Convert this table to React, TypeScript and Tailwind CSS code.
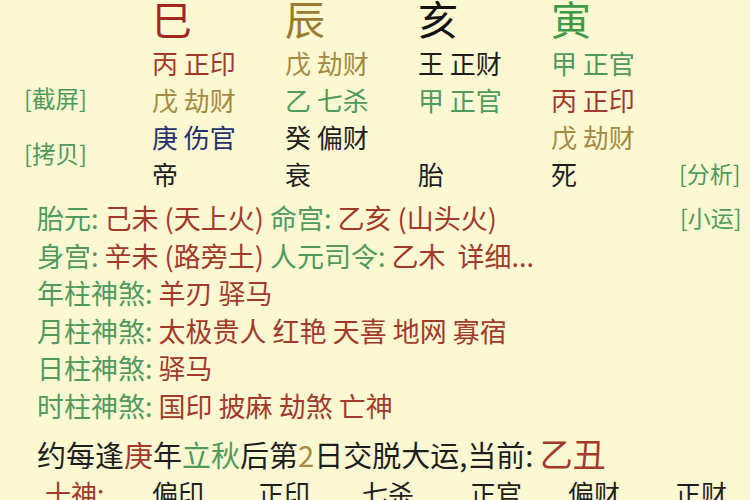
const font = "font-['Noto_Sans_CJK_SC','Noto_Sans',sans-serif]";

const GREEN = "text-[#4f9a5c]";
const RED = "text-[#a23a2b]";
const OLIVE = "text-[#a48a42]";
const NAVY = "text-[#25306e]";
const BLACK = "text-[#1e1e1e]";

type Cell = { text: string; color: string } | null;

const rows: Cell[][] = [
  [
    { text: "丙 正印", color: RED },
    { text: "戊 劫财", color: OLIVE },
    { text: "王 正财", color: BLACK },
    { text: "甲 正官", color: GREEN },
  ],
  [
    { text: "戊 劫财", color: OLIVE },
    { text: "乙 七杀", color: GREEN },
    { text: "甲 正官", color: GREEN },
    { text: "丙 正印", color: RED },
  ],
  [
    { text: "庚 伤官", color: NAVY },
    { text: "癸 偏财", color: BLACK },
    null,
    { text: "戊 劫财", color: OLIVE },
  ],
  [
    { text: "帝", color: BLACK },
    { text: "衰", color: BLACK },
    { text: "胎", color: BLACK },
    { text: "死", color: BLACK },
  ],
];

const shensha = [
  { label: "年柱神煞: ", value: "羊刃 驿马" },
  { label: "月柱神煞: ", value: "太极贵人 红艳 天喜 地网 寡宿" },
  { label: "日柱神煞: ", value: "驿马" },
  { label: "时柱神煞: ", value: "国印 披麻 劫煞 亡神" },
];

const shishen = [
  { text: "偏印", w: "w-[106px]" },
  { text: "正印", w: "w-[104px]" },
  { text: "七杀", w: "w-[108px]" },
  { text: "正官", w: "w-[98px]" },
  { text: "偏财", w: "w-[107px]" },
  { text: "正财", w: "w-[75px]" },
];

export default function App() {
  return (
    <div className={`${font} w-[750px] h-[500px] overflow-hidden bg-[#fcf8d2]`}>
      <div className="flex">
        <div className={`w-[152px] pl-[24px] pt-[83px] flex flex-col gap-[25px] text-[23.5px] leading-[30px] ${GREEN}`}>
          <div>[截屏]</div>
          <div>[拷贝]</div>
        </div>
        <div className="grid grid-cols-[133px_133px_133px_128px_1fr] text-[26px] leading-[37px]">
          <div className="h-[35px] text-[40px] leading-[36px] text-[#a3261f]">巳</div>
          <div className="h-[35px] text-[40px] leading-[36px] text-[#9b7b33]">辰</div>
          <div className="h-[35px] text-[40px] leading-[36px] text-[#111]">亥</div>
          <div className="h-[35px] text-[40px] leading-[36px] text-[#3c9a48]">寅</div>
          <div />
          <div className="col-span-5 h-[9px]" />
          {rows.map((r, i) => (
            <div key={i} className="contents">
              {r.map((c, j) => (
                <div key={j} className={`whitespace-pre ${c ? c.color : ""}`}>
                  {c ? c.text : ""}
                </div>
              ))}
              <div className={`text-[23px] ${GREEN}`}>{i === 3 ? "[分析]" : ""}</div>
            </div>
          ))}
        </div>
      </div>

      <div className="pl-[37px] pt-[7px] text-[27px] leading-[37.6px] whitespace-pre">
        <div className="flex">
          <div className="w-[643px]">
            <span className={GREEN}>胎元: </span>
            <span className={RED}>己未 (天上火)</span>
            <span className={GREEN}> 命宫: </span>
            <span className={RED}>乙亥 (山头火)</span>
          </div>
          <div className={`text-[23px] ${GREEN}`}>[小运]</div>
        </div>
        <div>
          <span className={GREEN}>身宫: </span>
          <span className={RED}>辛未 (路旁土)</span>
          <span className={GREEN}> 人元司令: </span>
          <span className={RED}>乙木  详细...</span>
        </div>
        {shensha.map((s) => (
          <div key={s.label}>
            <span className={GREEN}>{s.label}</span>
            <span className={RED}>{s.value}</span>
          </div>
        ))}
      </div>

      <div className={`pl-[37px] pt-[8px] text-[29px] leading-[40px] whitespace-pre ${BLACK}`}>
        约每逢<span className={RED}>庚</span>年<span className={GREEN}>立秋</span>后第
        <span className={OLIVE}>2</span>日交脱大运,当前: <span className={`text-[33px] ${RED}`}>乙丑</span>
      </div>

      <div className="flex pl-[45px] text-[26px] leading-[37px]">
        <div className={`w-[107px] ${RED}`}>十神:</div>
        {shishen.map((s, i) => (
          <div key={i} className={`${s.w} ${BLACK}`}>
            {s.text}
          </div>
        ))}
      </div>
    </div>
  );
}
